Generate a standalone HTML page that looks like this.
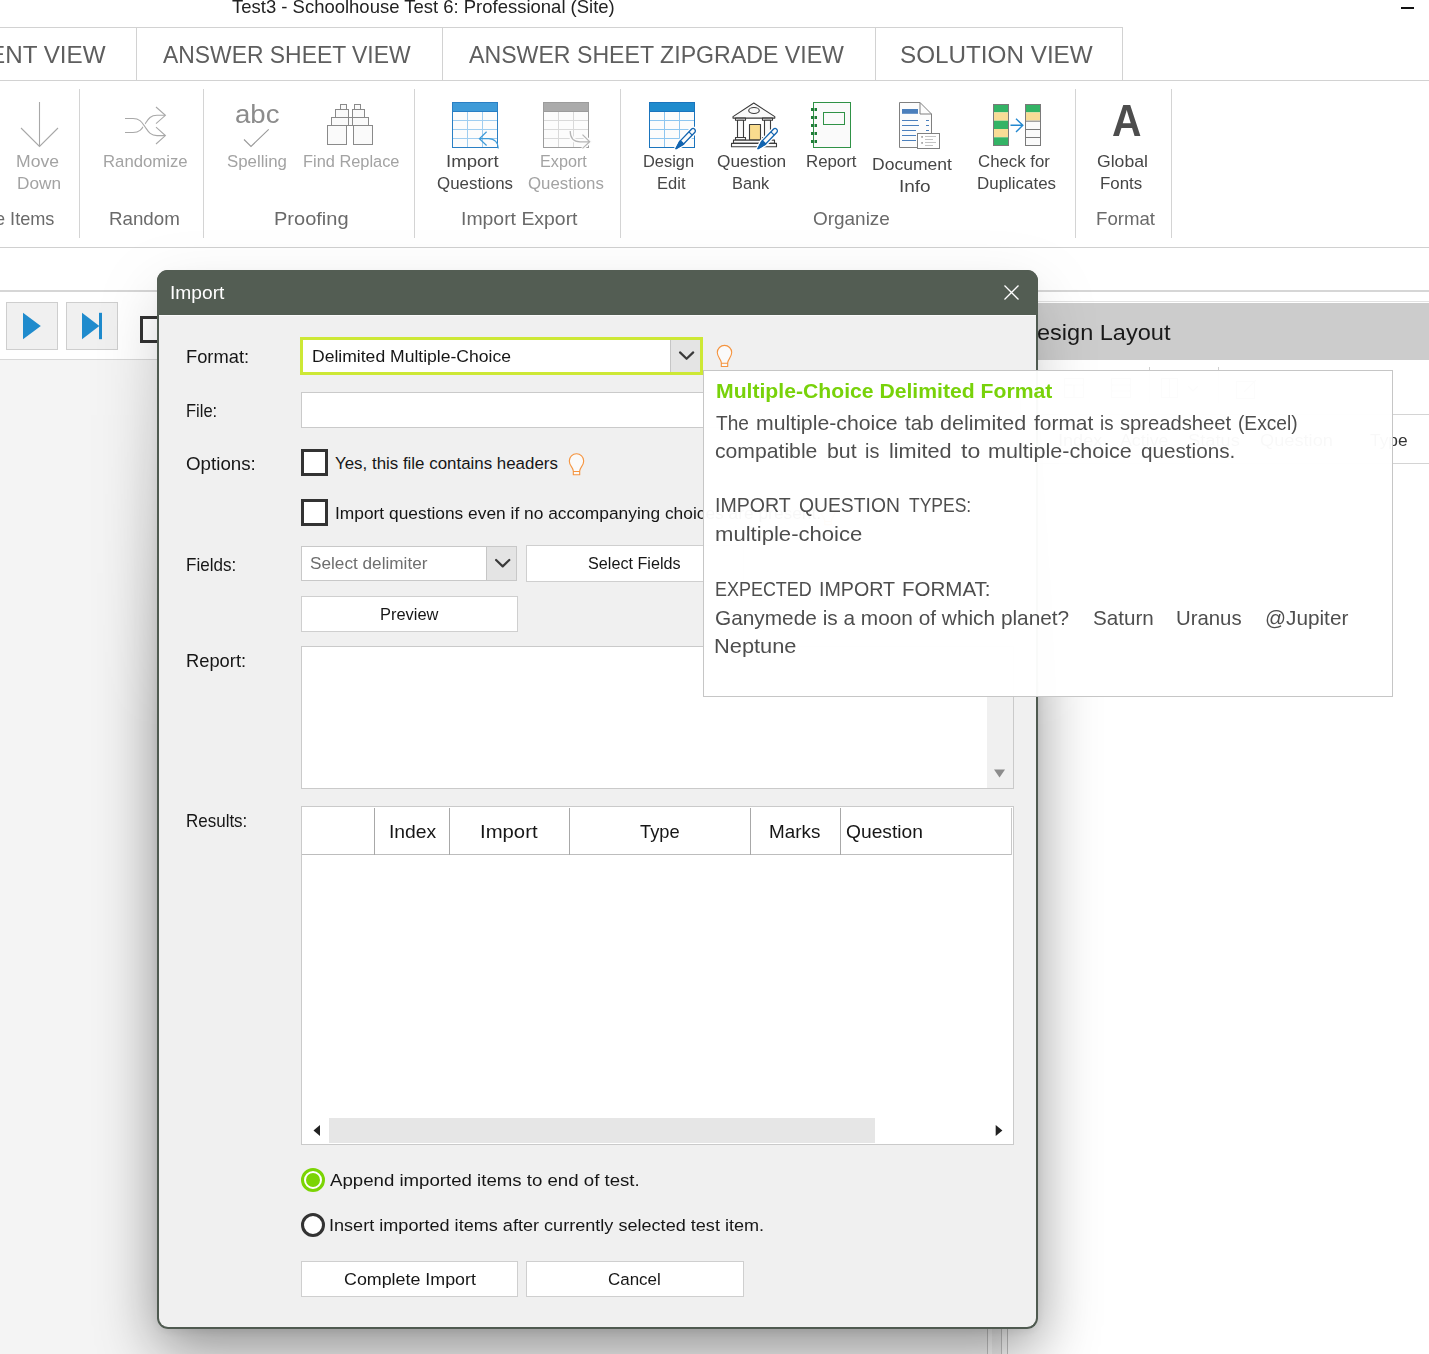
<!DOCTYPE html>
<html lang="en"><head><meta charset="utf-8"><title>Import</title>
<style>
html,body{margin:0;padding:0;}
body{width:1429px;height:1354px;position:relative;overflow:hidden;background:#fff;font-family:"Liberation Sans",sans-serif;}
.t{position:absolute;white-space:pre;line-height:1;transform-origin:0 0;}
.b{position:absolute;box-sizing:border-box;}
svg{position:absolute;overflow:visible;}
.vs{position:absolute;width:1px;background:#d4d4d4;top:89px;height:149px;}
.ts{position:absolute;width:1px;background:#d2d2d2;top:27px;height:54px;}
.btn{position:absolute;box-sizing:border-box;background:#fff;border:1px solid #cfcfcf;}
.cb{position:absolute;box-sizing:border-box;width:27px;height:27px;border:3px solid #333;background:#fff;}
</style></head>
<body>

<!-- window chrome -->
<div class="b" style="left:1401px;top:7px;width:13px;height:2px;background:#111"></div>
<!-- tabs -->
<div class="b" style="left:0;top:27px;width:1123px;height:1px;background:#d2d2d2"></div>
<div class="b" style="left:0;top:80px;width:1429px;height:1px;background:#d2d2d2"></div>
<div class="ts" style="left:136px"></div><div class="ts" style="left:442px"></div><div class="ts" style="left:875px"></div><div class="ts" style="left:1122px"></div>
<!-- ribbon separators -->
<div class="vs" style="left:79px"></div><div class="vs" style="left:203px"></div><div class="vs" style="left:414px"></div><div class="vs" style="left:620px"></div><div class="vs" style="left:1075px"></div><div class="vs" style="left:1171px"></div>
<div class="b" style="left:0;top:247px;width:1429px;height:1px;background:#d0d0d0"></div>
<!-- work area -->
<div class="b" style="left:0;top:290px;width:1429px;height:2px;background:#d6d6d6"></div>
<div class="b" style="left:0;top:359px;width:988px;height:1px;background:#d8d8d8"></div>
<div class="b" style="left:0;top:360px;width:988px;height:994px;background:#f4f4f4"></div>
<div class="b" style="left:987px;top:292px;width:21px;height:1062px;background:#f0f0f0;border-left:1px solid #c4c4c4;border-right:1px solid #c4c4c4"></div>
<div class="b" style="left:988px;top:292px;width:4px;height:1062px;background:#fbfbfb"></div>
<div class="b" style="left:1001px;top:292px;width:6px;height:1062px;background:#fbfbfb;border-left:1px solid #c4c4c4"></div>
<!-- nav buttons -->
<div class="b" style="left:6px;top:302px;width:52px;height:48px;background:#f0f0f0;border:1px solid #cecece"></div>
<div class="b" style="left:66px;top:302px;width:52px;height:48px;background:#f0f0f0;border:1px solid #cecece"></div>
<svg style="left:0;top:0" width="1429" height="400">
 <polygon points="23,312.8 23,339.2 40.8,326" fill="#1f8bcd"/>
 <polygon points="82,312.8 82,339.2 99.3,326" fill="#1f8bcd"/>
 <rect x="99" y="312.8" width="3" height="26.4" fill="#1f8bcd"/>
</svg>
<div class="b" style="left:140px;top:316px;width:27px;height:27px;border:3px solid #333;background:#fff"></div>
<!-- right panel -->
<div class="b" style="left:1008px;top:301px;width:421px;height:1px;background:#e2e2e2"></div>
<div class="b" style="left:1008px;top:303px;width:421px;height:57px;background:#cccccc"></div>
<div class="b" style="left:1149px;top:367px;width:1px;height:36px;background:#d0d0d0"></div>
<div class="b" style="left:1218px;top:367px;width:1px;height:36px;background:#d0d0d0"></div>
<div class="b" style="left:1008px;top:414px;width:421px;height:1px;background:#d4d4d4"></div>
<svg style="left:0;top:0" width="1429" height="420" fill="none" stroke="#9a9a9a" stroke-width="1.200"><rect x="1064.500" y="378.500" width="19" height="19"/><path d="M1065 385h19M1074 385v13"/><rect x="1111.500" y="378.500" width="19" height="19"/><path d="M1112 385h19M1112 391h19"/><rect x="1161.500" y="378.500" width="16" height="19"/><path d="M1169.500 379v19M1188 386l5 5 5 -5"/><path d="M1236.500 381.500h18v17h-18zM1244 392l12 -12"/></svg>
<div class="b" style="left:1008px;top:463px;width:421px;height:1px;background:#d4d4d4"></div>

<svg style="left:0;top:0" width="1429" height="260" fill="none">
 <!-- move down -->
 <g stroke="#a8a8a8" stroke-width="1.1"><path d="M39.5 102V146.5M21 128l18.5 18.5L58 128"/></g>
 <!-- shuffle -->
 <g stroke="#a8a8a8" stroke-width="1.1"><path d="M125 132.500h8c7 0 9 -4 12 -8.500s5 -8.700 12 -8.700h8"/><path d="M140 121.500c2.500 1.500 3.500 3.500 5 5s2.500 4 5 6" stroke="#fff" stroke-width="3.600"/><path d="M125 118.500h8c7 0 9 4 12 8.300s5 8.800 12 8.800h8"/><path d="M156 107l9.400 8.300L156 123.700M156 127.200l9.400 8.400L156 144"/></g>
 <!-- spelling check -->
 <path d="M244 139.500l7 7 17.700 -17.200" stroke="#9a9a9a" stroke-width="1.1"/>
 <!-- binoculars -->
 <g stroke="#8a8a8a" stroke-width="1" fill="#fafafa">
  <rect x="340.500" y="104.500" width="6" height="5"/><rect x="354.500" y="104.500" width="6" height="5"/>
  <rect x="335.500" y="109.500" width="13" height="8"/><rect x="352.500" y="109.500" width="12" height="8"/>
  <rect x="331.500" y="117.500" width="17" height="8"/><rect x="352.500" y="117.500" width="16" height="8"/>
  <rect x="348.500" y="117.500" width="4" height="8"/>
  <rect x="327.500" y="125.500" width="19" height="19"/><rect x="353.500" y="125.500" width="19" height="19"/>
 </g>
 <!-- import table -->
 <g>
  <rect x="452.500" y="102.500" width="45" height="45" fill="#fcfcfc" stroke="#2a7fc4"/>
  <path d="M467.500 111v36M482.500 111v36M453 120.500h44M453 129.500h44M453 138.500h44" stroke="#9fcdf0"/>
  <rect x="452.500" y="102.500" width="45" height="9" fill="#3f9bd8" stroke="#2a7fc4"/>
  <path d="M486.600 131.700l-7.200 7 7.200 6.800M479.600 138.700h9c6 0 9.700 4 9.700 9.800" stroke="#3f9bd8" stroke-width="1.2"/>
 </g>
 <!-- export table -->
 <g>
  <rect x="543.500" y="102.500" width="45" height="45" fill="#fcfcfc" stroke="#9c9c9c"/>
  <path d="M558.500 111v36M573.500 111v36M544 120.500h44M544 129.500h44M544 138.500h44" stroke="#d9d9d9"/>
  <rect x="543.500" y="102.500" width="45" height="9" fill="#ababab" stroke="#9c9c9c"/>
  <path d="M570.200 131c0 7 3 10.800 10 10.800h9M582.500 134.600l7.200 7.200 -7.200 6.600" stroke="#fcfcfc" stroke-width="4"/>
  <path d="M570.200 131c0 7 3 10.800 10 10.800h9M582.500 134.600l7.200 7.200 -7.200 6.600" stroke="#b4b4b4" stroke-width="1.2"/>
 </g>
 <!-- design table -->
 <g>
  <rect x="649.500" y="102.500" width="45" height="45" fill="#fcfcfc" stroke="#1a74bd"/>
  <path d="M664.500 111v36M679.500 111v36M650 120.500h44M650 129.500h44M650 138.500h44" stroke="#8ec6f0"/>
  <rect x="649.500" y="102.500" width="45" height="9" fill="#1f8bcd" stroke="#1a74bd"/>
 </g>
 <g transform="translate(676 148.6) rotate(-46.1)">
  <path d="M0 0L7.500 -2.300H24.600A2.300 2.300 0 0 1 24.600 2.300H7.500Z" fill="#fff" stroke="#fff" stroke-width="4" stroke-linejoin="round"/>
  <path d="M0 0L7.500 -2.300H24.600A2.300 2.300 0 0 1 24.600 2.300H7.500Z" fill="#fcfcfc" stroke="#1264b0" stroke-width="1.300" stroke-linejoin="round"/>
  <path d="M0 0L8.800 -2.300V2.300Z" fill="#1264b0" stroke="#1264b0" stroke-width="1.300" stroke-linejoin="round"/>
  <path d="M21 -2.300V2.300" stroke="#1264b0" stroke-width="1.200"/>
 </g>
 <!-- bank -->
 <g stroke="#3c3c3c" stroke-width="1.100" fill="#fafafa" stroke-linejoin="round">
  <path d="M753.800 103l-20.800 13.600v1.500h41.800v-1.500z"/>
  <ellipse cx="754" cy="110.500" rx="5.300" ry="3"/>
  <rect x="735.500" y="118.100" width="10" height="2.200"/><rect x="762.500" y="118.100" width="10" height="2.200"/>
  <rect x="737.500" y="120.300" width="6" height="17.200"/><rect x="764.500" y="120.300" width="6" height="17.200"/>
  <rect x="735.500" y="137.500" width="10" height="2.500"/><rect x="762.500" y="137.500" width="10" height="2.500"/>
  <rect x="749.500" y="124.500" width="11" height="15.600" fill="#f9dc8e"/>
  <rect x="733.500" y="140.100" width="41" height="3.300"/>
  <rect x="731.500" y="143.400" width="45" height="3.300"/>
 </g>
 <g transform="translate(758 148.6) rotate(-46.1)">
  <path d="M0 0L7.500 -2.300H24.600A2.300 2.300 0 0 1 24.600 2.300H7.500Z" fill="#fff" stroke="#fff" stroke-width="4" stroke-linejoin="round"/>
  <path d="M0 0L7.500 -2.300H24.600A2.300 2.300 0 0 1 24.600 2.300H7.500Z" fill="#fcfcfc" stroke="#1264b0" stroke-width="1.300" stroke-linejoin="round"/>
  <path d="M0 0L8.800 -2.300V2.300Z" fill="#1264b0" stroke="#1264b0" stroke-width="1.300" stroke-linejoin="round"/>
  <path d="M21 -2.300V2.300" stroke="#1264b0" stroke-width="1.200"/>
 </g>
 <!-- report -->
 <g>
  <rect x="813.500" y="102.500" width="37" height="45" fill="#fafafa" stroke="#2f9246"/>
  <rect x="823.500" y="112.500" width="21" height="12" fill="#fafafa" stroke="#2f9246"/>
  <g fill="#1f7d36"><rect x="811" y="108" width="2.500" height="3"/><rect x="814.500" y="108" width="2.500" height="3"/>
  <rect x="811" y="116" width="2.500" height="3"/><rect x="814.500" y="116" width="2.500" height="3"/>
  <rect x="811" y="124" width="2.500" height="3"/><rect x="814.500" y="124" width="2.500" height="3"/>
  <rect x="811" y="132" width="2.500" height="3"/><rect x="814.500" y="132" width="2.500" height="3"/>
  <rect x="811" y="140" width="2.500" height="3"/><rect x="814.500" y="140" width="2.500" height="3"/></g>
 </g>
 <!-- document info -->
 <g>
  <path d="M899.500 102.500h20.500l11.500 11.500v33.500h-32z" fill="#fcfcfc" stroke="#808080"/>
  <path d="M920 102.500v11.500h11.500" stroke="#808080"/>
  <rect x="902" y="109" width="16" height="4.800" fill="#4b7fbc"/>
  <path d="M902 120.500h16M902 125.500h17M902 130.500h14M902 135.500h14M902 140.500h14M926 120.500h3M926 125.500h3M926 130.500h3" stroke="#4b7fbc" stroke-width="1"/>
  <rect x="917.500" y="133.500" width="22" height="15" fill="#fff" stroke="#808080"/>
  <path d="M925 136.500h11M925 139.500h8M925 142.500h11M925 145.500h8" stroke="#b4b4b4" stroke-width="0.800"/>
  <rect x="921.200" y="136" width="1.800" height="1.800" fill="#aaa"/><rect x="921.200" y="142" width="1.800" height="1.800" fill="#aaa"/>
 </g>
 <!-- duplicates -->
 <g>
  <rect x="993" y="104" width="16" height="8.400" fill="#33b365"/><rect x="993" y="112.400" width="16" height="8.300" fill="#f8dc96"/><rect x="993" y="120.700" width="16" height="8.300" fill="#33b365"/><rect x="993" y="129" width="16" height="8.300" fill="#f8dc96"/><rect x="993" y="137.300" width="16" height="8.400" fill="#33b365"/>
  <rect x="993.500" y="104.500" width="15" height="41" stroke="#7a7a7a"/>
  <rect x="1025" y="104" width="16" height="8.400" fill="#33b365"/><rect x="1025" y="112.400" width="16" height="8.300" fill="#f8dc96"/><rect x="1025" y="120.700" width="16" height="25" fill="#fafafa"/>
  <path d="M1025 121.200h16M1025 129.500h16M1025 137.500h16" stroke="#7a7a7a"/>
  <rect x="1025.500" y="104.500" width="15" height="41" stroke="#7a7a7a"/>
  <path d="M1010.500 125.200h12.500M1016 118.700l6.800 6.500 -6.800 6.800" stroke="#2388d0" stroke-width="1.400"/>
 </g>
</svg>

<span class="t" style="left:232.00px;top:-2px;font-size:18.2px;color:#222;transform:scaleX(1.0160);">Test3 - Schoolhouse Test 6: Professional (Site)</span>
<span class="t" style="left:-11.50px;top:43px;font-size:24px;color:#5e5e5e;transform:scaleX(1.0088);">ENT VIEW</span>
<span class="t" style="left:163.00px;top:43px;font-size:24px;color:#5e5e5e;transform:scaleX(0.9538);">ANSWER SHEET VIEW</span>
<span class="t" style="left:469.00px;top:43px;font-size:24px;color:#5e5e5e;transform:scaleX(0.9640);">ANSWER SHEET ZIPGRADE VIEW</span>
<span class="t" style="left:900.00px;top:43px;font-size:24px;color:#5e5e5e;transform:scaleX(1.0105);">SOLUTION VIEW</span>
<span class="t" style="left:15.60px;top:154px;font-size:16.9px;color:#a3a3a3;transform:scaleX(1.0404);">Move</span>
<span class="t" style="left:16.60px;top:176px;font-size:16.9px;color:#a3a3a3;transform:scaleX(1.0197);">Down</span>
<span class="t" style="left:102.80px;top:154px;font-size:16.9px;color:#a3a3a3;transform:scaleX(0.9905);">Randomize</span>
<span class="t" style="left:226.50px;top:154px;font-size:16.9px;color:#a3a3a3;transform:scaleX(0.9967);">Spelling</span>
<span class="t" style="left:302.90px;top:154px;font-size:16.9px;color:#a3a3a3;transform:scaleX(0.9694);">Find Replace</span>
<span class="t" style="left:445.90px;top:154px;font-size:16.9px;color:#464646;transform:scaleX(1.1000);">Import</span>
<span class="t" style="left:437.00px;top:176px;font-size:16.9px;color:#464646;transform:scaleX(1.0002);">Questions</span>
<span class="t" style="left:540.00px;top:154px;font-size:16.9px;color:#a3a3a3;transform:scaleX(0.9583);">Export</span>
<span class="t" style="left:528.00px;top:176px;font-size:16.9px;color:#a3a3a3;transform:scaleX(0.9974);">Questions</span>
<span class="t" style="left:643.00px;top:154px;font-size:16.9px;color:#464646;transform:scaleX(0.9726);">Design</span>
<span class="t" style="left:656.80px;top:176px;font-size:16.9px;color:#464646;transform:scaleX(0.9787);">Edit</span>
<span class="t" style="left:716.70px;top:154px;font-size:16.9px;color:#464646;transform:scaleX(1.0243);">Question</span>
<span class="t" style="left:731.60px;top:176px;font-size:16.9px;color:#464646;transform:scaleX(0.9678);">Bank</span>
<span class="t" style="left:805.90px;top:154px;font-size:16.9px;color:#464646;transform:scaleX(0.9961);">Report</span>
<span class="t" style="left:871.60px;top:157px;font-size:16.9px;color:#464646;transform:scaleX(1.0369);">Document</span>
<span class="t" style="left:899.20px;top:179px;font-size:16.9px;color:#464646;transform:scaleX(1.1236);">Info</span>
<span class="t" style="left:978.00px;top:154px;font-size:16.9px;color:#464646;transform:scaleX(0.9945);">Check for</span>
<span class="t" style="left:976.80px;top:176px;font-size:16.9px;color:#464646;transform:scaleX(1.0027);">Duplicates</span>
<span class="t" style="left:1097.00px;top:154px;font-size:16.9px;color:#464646;transform:scaleX(1.0427);">Global</span>
<span class="t" style="left:1100.00px;top:176px;font-size:16.9px;color:#464646;transform:scaleX(1.0002);">Fonts</span>
<span class="t" style="left:-5.50px;top:210px;font-size:18.2px;color:#6a6a6a;transform:scaleX(0.9966);">e Items</span>
<span class="t" style="left:108.80px;top:210px;font-size:18.2px;color:#6a6a6a;transform:scaleX(1.0299);">Random</span>
<span class="t" style="left:273.80px;top:210px;font-size:18.2px;color:#6a6a6a;transform:scaleX(1.1004);">Proofing</span>
<span class="t" style="left:461.10px;top:210px;font-size:18.2px;color:#6a6a6a;transform:scaleX(1.0673);">Import Export</span>
<span class="t" style="left:812.50px;top:210px;font-size:18.2px;color:#6a6a6a;transform:scaleX(1.0417);">Organize</span>
<span class="t" style="left:1095.70px;top:210px;font-size:18.2px;color:#6a6a6a;transform:scaleX(1.0246);">Format</span>
<span class="t" style="left:234.80px;top:102px;font-size:25px;color:#8c8c8c;transform:scaleX(1.1026);">abc</span>
<span class="t" style="left:1112.30px;top:99px;font-size:44px;color:#4d4d4d;transform:scaleX(0.9277);font-weight:700;">A</span>
<span class="t" style="left:1036.80px;top:322px;font-size:22.4px;color:#1a1a1a;transform:scaleX(1.0508);">esign Layout</span>
<span class="t" style="left:1057.80px;top:433px;font-size:16.9px;color:#333;transform:scaleX(1.0720);">Index</span>
<span class="t" style="left:1120.00px;top:433px;font-size:16.9px;color:#333;transform:scaleX(1.0534);">Active</span>
<span class="t" style="left:1188.00px;top:433px;font-size:16.9px;color:#333;transform:scaleX(1.0828);">Status</span>
<span class="t" style="left:1260.40px;top:433px;font-size:16.9px;color:#333;transform:scaleX(1.0789);">Question</span>
<span class="t" style="left:1370.00px;top:433px;font-size:16.9px;color:#333;transform:scaleX(1.0280);">Type</span>

<div style="position:absolute;left:0;top:0;width:1429px;height:1354px;-webkit-mask-image:linear-gradient(to bottom,rgba(0,0,0,0.28) 0,rgba(0,0,0,0.28) 275px,#000 730px);mask-image:linear-gradient(to bottom,rgba(0,0,0,0.28) 0,rgba(0,0,0,0.28) 275px,#000 730px)">
 <div class="b" style="left:157px;top:270px;width:881px;height:1059px;border-radius:11px;box-shadow:0 20px 60px 0 rgba(0,0,0,0.42),0 2px 10px rgba(0,0,0,0.08)"></div>
</div>
<div class="b" style="left:157px;top:270px;width:881px;height:1059px;border-radius:11px;background:linear-gradient(to bottom,#535d53 0,#535d53 45px,#fafafa 45px,#fafafa 46px,#f0f0f0 46px);background-origin:border-box;border:2px solid #4f5a50;border-top-color:#535d53"></div>
<div class="b" style="left:157px;top:270px;width:881px;height:45px;border-radius:11px 11px 0 0;background:#535d53"></div>
<svg style="left:0;top:0" width="1429" height="1354" fill="none">
 <path d="M1004.500 285.500l14 14M1018.500 285.500l-14 14" stroke="#fff" stroke-width="1.300"/>
</svg>
<!-- format select -->
<div class="b" style="left:300px;top:337px;width:403px;height:38px;border:3px solid #cde835;background:#fff"></div>
<div class="b" style="left:670px;top:340px;width:30px;height:32px;background:#e4e4e4;border-left:1px solid #c6c6c6"></div>
<svg style="left:0;top:0" width="1429" height="1354" fill="none">
 <path d="M680 352.400l6.600 6.400 6.600 -6.400" stroke="#3a3a3a" stroke-width="2.200" stroke-linecap="round" stroke-linejoin="round"/>
 <path d="M496.100 560l6.600 6.400 6.600 -6.400" stroke="#3a3a3a" stroke-width="2.200" stroke-linecap="round" stroke-linejoin="round"/>
 <g><path d="M721.300 366.500v-3.700c0 -3.500 -4 -5.300 -4 -10.200a7.200 7.200 0 0 1 14.400 0c0 4.900 -4 6.700 -4 10.200v3.700zM721.300 363.200h6.400" fill="#fafafa" stroke="#f5943f" stroke-width="1.100" stroke-linejoin="round"/></g>
 <g transform="translate(-148 108.3)"><path d="M721.300 366.500v-3.700c0 -3.500 -4 -5.300 -4 -10.200a7.200 7.200 0 0 1 14.400 0c0 4.900 -4 6.700 -4 10.200v3.700zM721.300 363.200h6.400" fill="#fafafa" stroke="#f5943f" stroke-width="1.100" stroke-linejoin="round"/></g>
 <g transform="translate(103.5 158.3)"><path d="M721.300 366.500v-3.700c0 -3.500 -4 -5.300 -4 -10.200a7.200 7.200 0 0 1 14.400 0c0 4.900 -4 6.700 -4 10.200v3.700zM721.300 363.200h6.400" fill="#fafafa" stroke="#f5943f" stroke-width="1.100" stroke-linejoin="round"/></g>
</svg>
<!-- file input -->
<div class="b" style="left:301px;top:392px;width:720px;height:36px;border:1px solid #cacaca;background:#fff"></div>
<div class="cb" style="left:301px;top:449px"></div>
<div class="cb" style="left:301px;top:499px"></div>
<!-- delimiter select -->
<div class="b" style="left:301px;top:546px;width:216px;height:35px;border:1px solid #c8c8c8;background:#fff"></div>
<div class="b" style="left:486px;top:547px;width:30px;height:33px;background:#e4e4e4;border-left:1px solid #c6c6c6"></div>
<svg style="left:0;top:0" width="1429" height="1354" fill="none">
 <path d="M496.100 560l6.600 6.400 6.600 -6.400" stroke="#3a3a3a" stroke-width="2.200" stroke-linecap="round" stroke-linejoin="round"/>
</svg>
<div class="btn" style="left:526px;top:545px;width:218px;height:37px"></div>
<div class="btn" style="left:301px;top:596px;width:217px;height:36px"></div>
<!-- report -->
<div class="b" style="left:301px;top:646px;width:713px;height:143px;border:1px solid #cacaca;background:#fff"></div>
<div class="b" style="left:987px;top:647px;width:26px;height:141px;background:#f0f0f0"></div>
<svg style="left:0;top:0" width="1429" height="1354"><polygon points="994,769.500 1005,769.500 999.500,777.500" fill="#8c8c8c"/>
</svg>
<!-- results -->
<div class="b" style="left:301px;top:806px;width:713px;height:339px;border:1px solid #cacaca;background:#fff"></div>
<div class="b" style="left:302px;top:854px;width:710px;height:1px;background:#bdbdbd"></div>
<div class="b" style="left:374px;top:808px;width:1px;height:47px;background:#a8a8a8"></div>
<div class="b" style="left:449px;top:808px;width:1px;height:47px;background:#a8a8a8"></div>
<div class="b" style="left:569px;top:808px;width:1px;height:47px;background:#a8a8a8"></div>
<div class="b" style="left:750px;top:808px;width:1px;height:47px;background:#a8a8a8"></div>
<div class="b" style="left:840px;top:808px;width:1px;height:47px;background:#a8a8a8"></div>
<div class="b" style="left:1011px;top:808px;width:1px;height:47px;background:#c8c8c8"></div>
<div class="b" style="left:329px;top:1118px;width:546px;height:25px;background:#e6e6e6"></div>
<svg style="left:0;top:0" width="1429" height="1354"><polygon points="320,1125 320,1136 313.500,1130.500" fill="#222"/><polygon points="995.700,1125 995.700,1136 1002.400,1130.500" fill="#222"/></svg>
<!-- radios -->
<div class="b" style="left:301px;top:1167.500px;width:24px;height:24px;border-radius:50%;border:3px solid #7bd404;background:#fff"></div>
<div class="b" style="left:306px;top:1172.500px;width:14px;height:14px;border-radius:50%;background:#7bd404"></div>
<div class="b" style="left:301px;top:1212.500px;width:24px;height:24px;border-radius:50%;border:3px solid #333;background:#fff"></div>
<div class="btn" style="left:301px;top:1261px;width:217px;height:36px"></div>
<div class="btn" style="left:526px;top:1261px;width:218px;height:36px"></div>

<span class="t" style="left:170.10px;top:285px;font-size:17.5px;color:#ffffff;transform:scaleX(1.0958);">Import</span>
<span class="t" style="left:185.70px;top:348px;font-size:18.2px;color:#161616;transform:scaleX(1.0067);">Format:</span>
<span class="t" style="left:311.70px;top:349px;font-size:16.9px;color:#161616;transform:scaleX(1.0389);">Delimited Multiple-Choice</span>
<span class="t" style="left:185.70px;top:402px;font-size:18.2px;color:#161616;transform:scaleX(0.9062);">File:</span>
<span class="t" style="left:185.70px;top:455px;font-size:18.2px;color:#161616;transform:scaleX(1.0308);">Options:</span>
<span class="t" style="left:335.00px;top:456px;font-size:16.9px;color:#161616;transform:scaleX(1.0000);">Yes, this file contains headers</span>
<span class="t" style="left:334.80px;top:506px;font-size:16.9px;color:#161616;transform:scaleX(1.0274);">Import questions even if no accompanying choices are present.</span>
<span class="t" style="left:185.70px;top:556px;font-size:18.2px;color:#161616;transform:scaleX(0.9373);">Fields:</span>
<span class="t" style="left:310.00px;top:556px;font-size:16.9px;color:#6e6e6e;transform:scaleX(1.0176);">Select delimiter</span>
<span class="t" style="left:588.00px;top:556px;font-size:16.9px;color:#161616;transform:scaleX(0.9579);">Select Fields</span>
<span class="t" style="left:379.70px;top:607px;font-size:16.9px;color:#161616;transform:scaleX(0.9729);">Preview</span>
<span class="t" style="left:185.70px;top:652px;font-size:18.2px;color:#161616;transform:scaleX(1.0070);">Report:</span>
<span class="t" style="left:185.90px;top:812px;font-size:18.2px;color:#161616;transform:scaleX(0.9333);">Results:</span>
<span class="t" style="left:388.60px;top:823px;font-size:18.2px;color:#161616;transform:scaleX(1.0622);">Index</span>
<span class="t" style="left:479.60px;top:823px;font-size:18.2px;color:#161616;transform:scaleX(1.1161);">Import</span>
<span class="t" style="left:640.00px;top:823px;font-size:18.2px;color:#161616;transform:scaleX(1.0054);">Type</span>
<span class="t" style="left:769.30px;top:823px;font-size:18.2px;color:#161616;transform:scaleX(1.0375);">Marks</span>
<span class="t" style="left:845.50px;top:823px;font-size:18.2px;color:#161616;transform:scaleX(1.0564);">Question</span>
<span class="t" style="left:329.50px;top:1173px;font-size:16.9px;color:#161616;transform:scaleX(1.1032);">Append imported items to end of test.</span>
<span class="t" style="left:328.70px;top:1218px;font-size:16.9px;color:#161616;transform:scaleX(1.0705);">Insert imported items after currently selected test item.</span>
<span class="t" style="left:343.80px;top:1272px;font-size:16.9px;color:#161616;transform:scaleX(1.0565);">Complete Import</span>
<span class="t" style="left:608.40px;top:1272px;font-size:16.9px;color:#161616;transform:scaleX(1.0041);">Cancel</span>

<div class="b" style="left:703px;top:370px;width:690px;height:327px;border:1px solid #c6c6c6;background:rgba(255,255,255,0.97)"></div>

<span class="t" style="left:715.60px;top:380px;font-size:21px;color:#78d20a;transform:scaleX(1.0078);font-weight:700;">Multiple-Choice Delimited Format</span>
<span class="t" style="left:716.30px;top:412px;font-size:21px;color:#4e4e4e;transform:scaleX(0.9086);">The</span>
<span class="t" style="left:755.60px;top:412px;font-size:21px;color:#4e4e4e;transform:scaleX(1.0116);">multiple-choice</span>
<span class="t" style="left:905.30px;top:412px;font-size:21px;color:#4e4e4e;transform:scaleX(0.9787);">tab</span>
<span class="t" style="left:940.00px;top:412px;font-size:21px;color:#4e4e4e;transform:scaleX(1.0244);">delimited</span>
<span class="t" style="left:1033.60px;top:412px;font-size:21px;color:#4e4e4e;transform:scaleX(0.9967);">format</span>
<span class="t" style="left:1100.20px;top:412px;font-size:21px;color:#4e4e4e;transform:scaleX(0.8860);">is</span>
<span class="t" style="left:1119.70px;top:412px;font-size:21px;color:#4e4e4e;transform:scaleX(0.9617);">spreadsheet</span>
<span class="t" style="left:1238.30px;top:412px;font-size:21px;color:#4e4e4e;transform:scaleX(0.9111);">(Excel)</span>
<span class="t" style="left:715.30px;top:440px;font-size:21px;color:#4e4e4e;transform:scaleX(1.0080);">compatible</span>
<span class="t" style="left:826.60px;top:440px;font-size:21px;color:#4e4e4e;transform:scaleX(1.0144);">but</span>
<span class="t" style="left:865.40px;top:440px;font-size:21px;color:#4e4e4e;transform:scaleX(0.9450);">is</span>
<span class="t" style="left:889.00px;top:440px;font-size:21px;color:#4e4e4e;transform:scaleX(1.0311);">limited</span>
<span class="t" style="left:960.90px;top:440px;font-size:21px;color:#4e4e4e;transform:scaleX(1.0963);">to</span>
<span class="t" style="left:987.80px;top:440px;font-size:21px;color:#4e4e4e;transform:scaleX(1.0261);">multiple-choice</span>
<span class="t" style="left:1140.70px;top:440px;font-size:21px;color:#4e4e4e;transform:scaleX(0.9850);">questions.</span>
<span class="t" style="left:714.80px;top:494px;font-size:21px;color:#4e4e4e;transform:scaleX(0.9317);">IMPORT</span>
<span class="t" style="left:799.30px;top:494px;font-size:21px;color:#4e4e4e;transform:scaleX(0.9196);">QUESTION</span>
<span class="t" style="left:908.60px;top:494px;font-size:21px;color:#4e4e4e;transform:scaleX(0.8329);">TYPES:</span>
<span class="t" style="left:714.60px;top:523px;font-size:21px;color:#4e4e4e;transform:scaleX(1.0522);">multiple-choice</span>
<span class="t" style="left:715.00px;top:578px;font-size:21px;color:#4e4e4e;transform:scaleX(0.8546);">EXPECTED</span>
<span class="t" style="left:819.20px;top:578px;font-size:21px;color:#4e4e4e;transform:scaleX(0.9367);">IMPORT</span>
<span class="t" style="left:902.00px;top:578px;font-size:21px;color:#4e4e4e;transform:scaleX(0.9770);">FORMAT:</span>
<span class="t" style="left:715.00px;top:607px;font-size:21px;color:#4e4e4e;transform:scaleX(0.9916);">Ganymede is a moon of which planet?</span>
<span class="t" style="left:1092.50px;top:607px;font-size:21px;color:#4e4e4e;transform:scaleX(0.9834);">Saturn</span>
<span class="t" style="left:1175.50px;top:607px;font-size:21px;color:#4e4e4e;transform:scaleX(0.9693);">Uranus</span>
<span class="t" style="left:1264.50px;top:607px;font-size:21px;color:#4e4e4e;transform:scaleX(0.9878);">@Jupiter</span>
<span class="t" style="left:714.00px;top:635px;font-size:21px;color:#4e4e4e;transform:scaleX(1.0390);">Neptune</span>
</body></html>
